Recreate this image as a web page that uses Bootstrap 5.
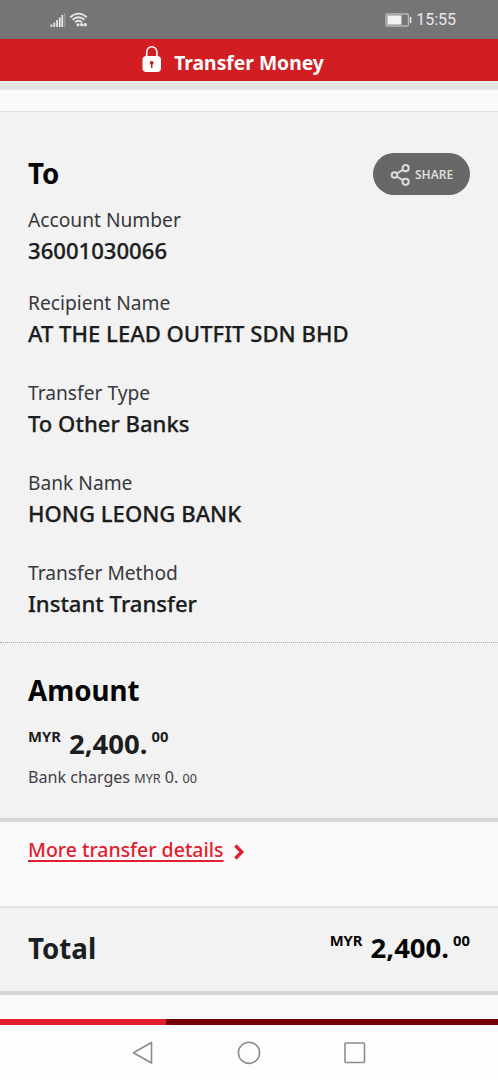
<!doctype html>
<html lang="en">
<head>
    <meta charset="utf-8">
    <title>Transfer Money</title>
    <meta name="viewport" content="width=device-width, initial-scale=1">
    <link href="https://cdn.jsdelivr.net/npm/bootstrap@5.3.3/dist/css/bootstrap.min.css" rel="stylesheet">
    <style>
        body { font-family: "Noto Sans", "Open Sans", sans-serif; background: #fafafa; color: #1c1d20; }
        svg { display: block; flex: none; }

        .status-bar { height: 39px; padding: 0 42px 0 50px; background: #757575; }
        .clock { font: 16px/20px Roboto, sans-serif; color: #e9e9e9; }
        .title-bar { height: 42px; padding: 5px 32px 0 0; background: #d01e22; }
        .page-title { font-size: 19.3px; line-height: 26px; font-weight: 700; }
        .title-shade { height: 9px; background: #e3e5e2; border-top: 2px solid #ececec; }
        .strip { height: 21px; }
        .strip-end { height: 24px; }

        .pane { padding: 0 28px; background: #f2f2f2; }
        .pane-to { height: 532px; padding-top: 41px; border-top: 1px solid #dedede; border-bottom: 1px dotted #aaa; }
        .pane-amount { height: 175px; padding-top: 27px; }
        .pane-total { height: 85px; padding-bottom: 4px; border-top: 2px solid #e3e3e3; }
        .rule { height: 4px; background: #d6d6d6; }

        .heading { font-size: 27.7px; line-height: 40px; font-weight: 700; color: #050505; }
        .btn-share { width: 97px; height: 42px; padding: 1px 0 0 17px; background: #676767 !important; color: #ddd !important; font-size: 12px; font-weight: 600; line-height: 20px; border: 0; }
        .field-label { font-size: 19.2px; line-height: 28px; color: #38393d; }
        .field-value { font-size: 22.1px; line-height: 32px; font-weight: 500; -webkit-text-stroke: .25px #1c1d20; }
        .field + .field { margin-top: 30px; }
        .field:first-child + .field { margin-top: 23px; }
        .fields { margin-top: 13px; }
        .share-row { height: 40px; }

        .money { font-weight: 700; line-height: 36px; }
        .money .unit { font-size: 14.8px; line-height: 20px; }
        .money .whole { font-size: 27.5px; }
        .charges { margin-top: 3px; font-size: 16.1px; line-height: 24px; color: #3f4045; }
        .charges .tiny { font-size: 12.6px; }
        .details { height: 84px; padding: 14px 28px 0; }
        .details a { font-size: 19.5px; line-height: 28px; font-weight: 500; color: #e3202d; text-underline-offset: 3px; text-decoration-thickness: 2px; }
        .total-word { font-size: 27.7px; line-height: 40px; font-weight: 700; }
        .black { color: #060606; }

        .steps { height: 6px; background: #720004; }
        .steps div { background: #e31e2c; }
        .nav-keys { height: 55px; background: #fdfdfd; }
    </style>
    <script src="https://cdn.jsdelivr.net/npm/bootstrap@5.3.3/dist/js/bootstrap.bundle.min.js"></script>
</head>

<body>

<!-- status bar -->
<div class="status-bar d-flex align-items-center justify-content-between">
    <svg width="38" height="16" viewBox="0 0 38 16" fill="none">
        <g fill="#e6e6e6">
            <rect x=".5" y="12.5" width="1.8" height="2.5"/>
            <rect x="3.4" y="10.5" width="1.8" height="4.5"/>
            <rect x="6.2" y="8" width="1.8" height="7"/>
            <rect x="8.9" y="5.5" width="1.8" height="9.5"/>
            <rect x="11.4" y="3" width="1.8" height="12"/>
            <rect x="14.2" y="1" width="1.2" height="14" opacity=".35"/>
            <circle cx="28" cy="12.8" r="1.6"/>
            <circle cx="31.7" cy="12.8" r="1.7"/>
            <circle cx="35.2" cy="12.8" r="1.7"/>
        </g>
        <g stroke="#e6e6e6" stroke-width="1.8">
            <path d="M20.2 5.2Q28.5-2 36.8 5.2"/>
            <path d="M22.6 7.8Q28.5 2.8 34.4 7.8"/>
            <path d="M25 10.3Q28.5 7.3 32 10.3"/>
        </g>
    </svg>
    <div class="d-flex align-items-center gap-1">
        <svg width="28" height="14" viewBox="0 0 28 14">
            <rect x="2" y="1" width="22.5" height="12" rx="1.6" fill="none" stroke="#b9b9b9" stroke-width="1.4"/>
            <rect x="3.4" y="2.4" width="14" height="9.2" fill="#f2f2f2"/>
            <rect x="25.8" y="3.8" width="1.6" height="6.4" rx=".7" fill="#e6e6e6"/>
        </svg>
        <span class="clock">15:55</span>
    </div>
</div>

<!-- title -->
<header class="title-bar d-flex align-items-center justify-content-center text-white">
    <svg class="mb-2" width="20" height="28" viewBox="0 0 20 28">
        <path d="M4.7 12V7a5.1 5.3 0 0 1 10.2 0V12" fill="none" stroke="#fff" stroke-width="1.6"/>
        <rect x=".5" y="11" width="18.5" height="16" rx="4" fill="#fff"/>
        <circle cx="9.7" cy="17.8" r="1.9" fill="#c01c20"/>
        <path d="M9.7 18v5" stroke="#c01c20" stroke-width="1.4"/>
    </svg>
    <span class="page-title ms-2 ps-1">Transfer Money</span>
</header>
<div class="title-shade"></div>
<div class="strip"></div>

<!-- recipient -->
<section class="pane pane-to">
    <div class="share-row d-flex justify-content-between align-items-start">
        <div class="heading">To</div>
        <button class="btn btn-share rounded-pill d-flex align-items-center" type="button">
            <svg width="21" height="22" viewBox="0 0 21 22" fill="none" stroke="#dcdcdc" stroke-width="2">
                <circle cx="4.5" cy="11" r="2.8"/>
                <circle cx="15.6" cy="4.2" r="3.1"/>
                <circle cx="15.6" cy="17.8" r="3.1"/>
                <path d="M6.8 9.5l6.1-3.7M6.8 12.5l6.1 3.7"/>
            </svg>
            <span class="ms-1">SHARE</span>
        </button>
    </div>
    <div class="fields">
        <div class="field">
            <div class="field-label">Account Number</div>
            <div class="field-value">36001030066</div>
        </div>
        <div class="field">
            <div class="field-label">Recipient Name</div>
            <div class="field-value">AT THE LEAD OUTFIT SDN BHD</div>
        </div>
        <div class="field">
            <div class="field-label">Transfer Type</div>
            <div class="field-value">To Other Banks</div>
        </div>
        <div class="field">
            <div class="field-label">Bank Name</div>
            <div class="field-value">HONG LEONG BANK</div>
        </div>
        <div class="field">
            <div class="field-label">Transfer Method</div>
            <div class="field-value">Instant Transfer</div>
        </div>
    </div>
</section>

<!-- amount -->
<section class="pane pane-amount">
    <div class="heading">Amount</div>
    <div class="money d-flex mt-3">
        <span class="unit">MYR</span>
        <span class="whole ms-2">2,400.</span>
        <span class="unit ms-1">00</span>
    </div>
    <div class="charges">Bank charges <span class="tiny">MYR</span> 0. <span class="tiny">00</span></div>
</section>
<div class="rule"></div>

<div class="details d-flex">
    <a href="#">More transfer details</a>
    <svg class="ms-2 mt-2" width="14" height="18" viewBox="0 0 14 18">
        <path d="M3.4 1.5l6.3 6.5-6.3 6.5" fill="none" stroke="#e3202d" stroke-width="3.4"/>
    </svg>
</div>

<!-- total -->
<section class="pane pane-total d-flex justify-content-between align-items-center">
    <div class="total-word">Total</div>
    <div class="money black d-flex">
        <span class="unit">MYR</span>
        <span class="whole ms-2">2,400.</span>
        <span class="unit ms-1">00</span>
    </div>
</section>
<div class="rule"></div>
<div class="strip-end"></div>

<!-- step progress -->
<div class="steps row g-0">
    <div class="col-4"></div>
</div>

<!-- system keys -->
<div class="nav-keys d-flex justify-content-center align-items-center">
    <svg width="236" height="26" viewBox="0 0 236 26" fill="none" stroke="#8c8c8c" stroke-width="1.6" stroke-linejoin="round">
        <path d="M20.5 2.5v20.5L2.5 12.8z"/>
        <circle cx="118" cy="12.8" r="10.6"/>
        <rect x="214" y="3" width="19.5" height="19.5" rx="1"/>
    </svg>
</div>

</body>
</html>
